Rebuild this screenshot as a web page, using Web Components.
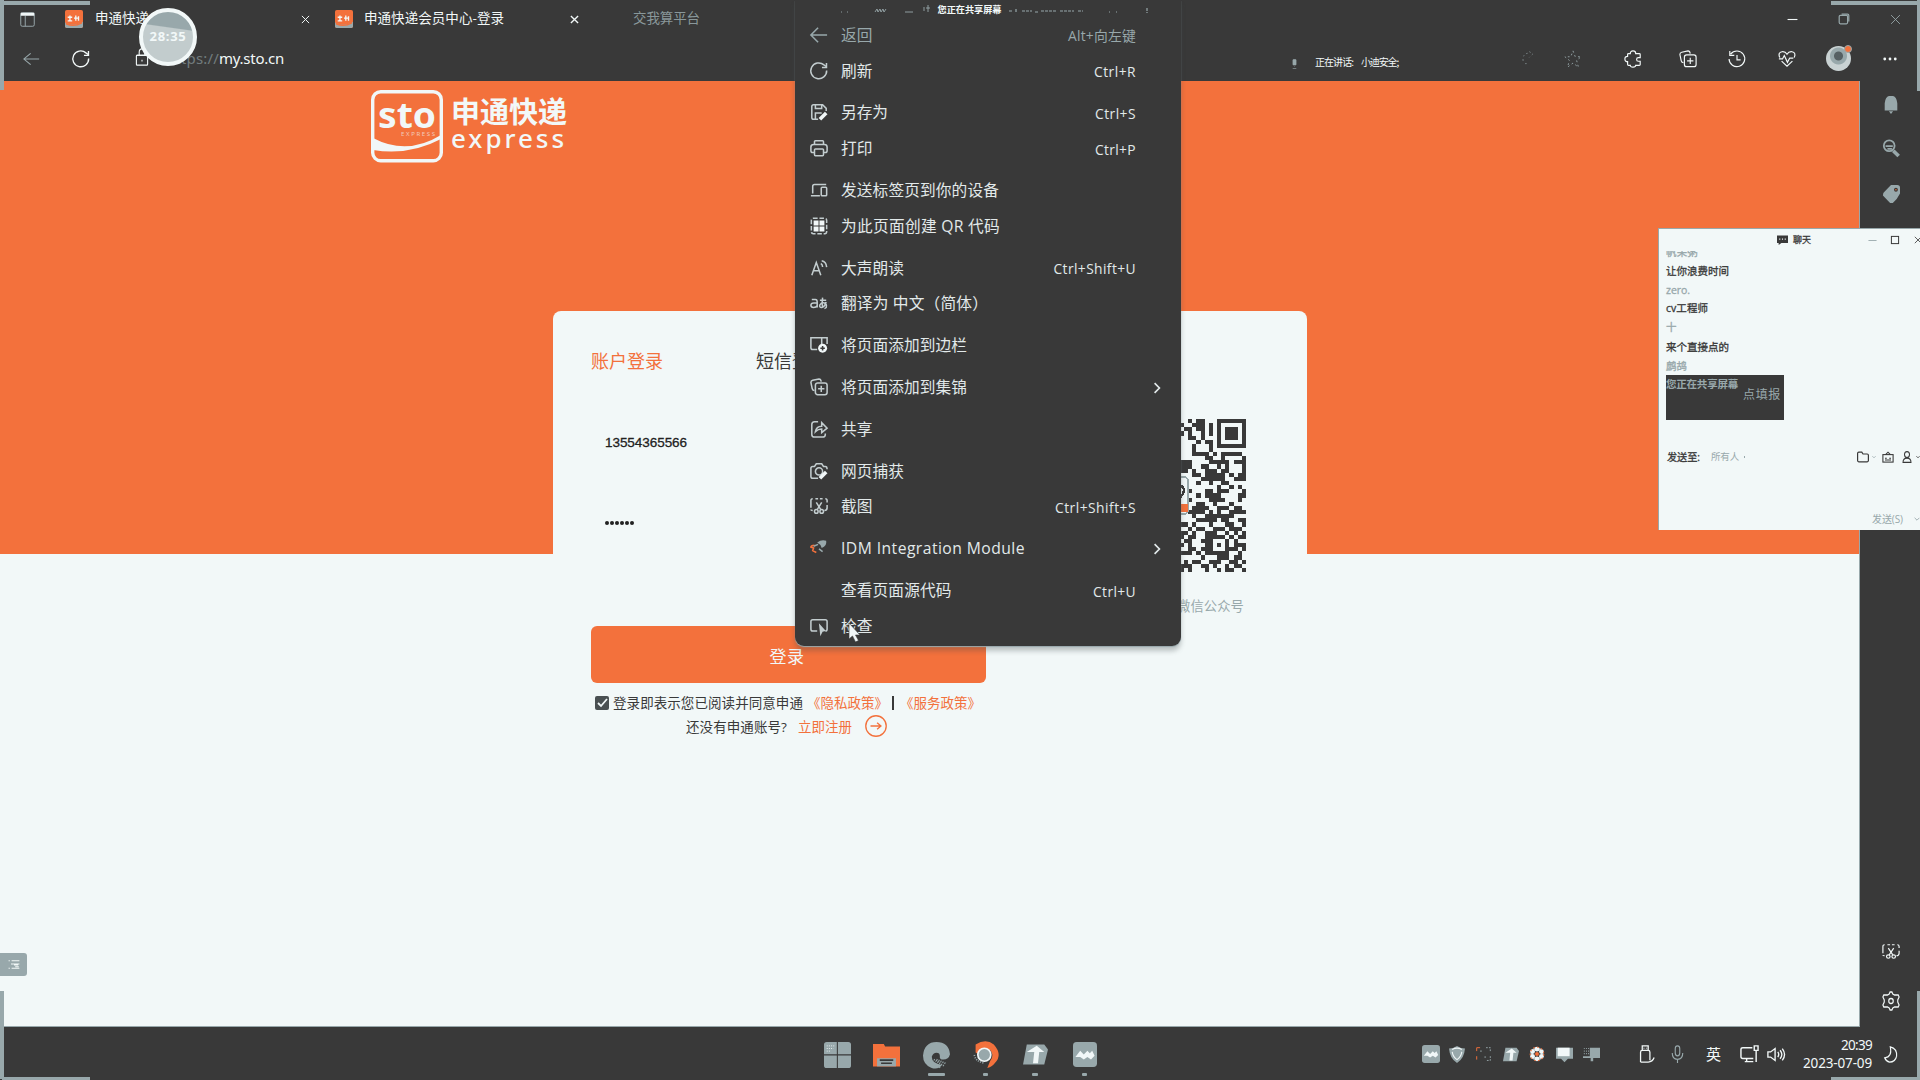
<!DOCTYPE html>
<html lang="zh-CN">
<head>
<meta charset="utf-8">
<title>申通快递会员中心-登录</title>
<style>
:root{--dark:#393939;--orange:#f3713c;--light:#f2f8f8;--gray:#98a8ab}
html,body{margin:0;width:1920px;height:1080px;overflow:hidden;background:var(--dark)}
body{font-family:"Open Sans","Noto Sans CJK SC",sans-serif;color:var(--light)}
</style>
</head>
<body>
<desktop-screen></desktop-screen>
<script>
const define=(name,html,init)=>customElements.define(name,class extends HTMLElement{
  constructor(){super();const t=document.createElement('template');t.innerHTML=html;
    this.attachShadow({mode:'open'}).append(t.content.cloneNode(true));}
  connectedCallback(){if(init)init.call(this,this.shadowRoot);}
});

/* Glyphs are drawn on a 20x20 grid; c = currentColor stroke */
const snip='<path d="M1 12V4q0-2 2-2M6 2h3M11 2h3M17 2q2 0 2 2v2M19 9v3q0 3-3 3M1 14q0 1 2 1"/><path d="M7 6l5 8M13 6l-5 8"/><circle cx="7" cy="16" r="2"/><circle cx="13" cy="16" r="2"/>';
const coll='<path d="M5 14Q3 14 2.500 12L1 5Q1 3 3 2.500L10 1Q12 1 12.500 4"/><rect x="6" y="5.500" width="13" height="13" rx="2.500"/><path d="M12.500 8.500v7M9 12h7"/>';
const reload='<path d="M18.500 9.500A8.800 8.800 0 1 1 15.500 3.200L18 5"/><path d="M18.300 1v5h-5"/>';
const sto='<rect width="20" height="20" rx="2" fill="var(--orange)" stroke="none"/><path d="M3 8h5M5.500 6v6M3 12h5M12 6v6M10 9h5M15 7v5" stroke="#f1f7f8" stroke-width="1.500"/><path d="M0 14q10 5 20-1v5q0 2-2 2H2q-2 0-2-2z" fill="#98a8ab" stroke="none"/><path d="M1 14q9 5 18-1v2q-9 5-18 1z" fill="var(--orange)" stroke="none"/>';
const G={
 tabs:'<rect x="1" y="1" width="18" height="18" rx="2"/><path d="M7 5v14"/><path d="M1 3h18" stroke-width="4" stroke="#f1f7f8"/>',
 sto, x:'<path d="M2 2l16 16M18 2L2 18"/>',
 back:'<path d="M19 10H1M9 2L1 10l8 8"/>', reload,
 lock:'<rect x="2" y="8" width="16" height="11" rx="1"/><path d="M6 8V5q0-4 4-4t4 4v3M10 13v2" />',
 min:'<path d="M1 10h18"/>',
 max:'<rect x="2" y="4" width="14" height="14" rx="2"/><path d="M6 2h10q2 0 2 2v10"/>',
 sq:'<rect x="1" y="1" width="18" height="18"/>',
 puzzle:'<path d="M7 4q0-3 3-3t3 3h4q1 0 1 1v3.500h-2q-2 0-2 2t2 2h2V16q0 1-1 1h-4q0 2-3 2t-3-2H5q-1 0-1-1v-3q-3 0-3-3t3-3V5q0-1 1-1z"/>',
 coll, history:'<path d="M3 4.500A8.700 8.700 0 1 1 1.200 10M2 1v5h5M10 5.500V11h4"/>',
 heart:'<path d="M2 9Q-.500 3 4.500 2 8 1.500 10 5 12 1.500 15.500 2 20.500 3 18 9M1 10.500h4l2-4 3.500 8 2.500-5h4M4 13l6 6 6-6"/>',
 dots:'<g fill="currentColor" stroke="none"><circle cx="2.500" cy="10" r="2"/><circle cx="10" cy="10" r="2"/><circle cx="17.500" cy="10" r="2"/></g>',
 star:'<path stroke-dasharray="2 3" d="M10 1l2.500 6.500H19l-5 4 2 7.500-6-4.500L4 19l2-7.500-5-4h6.500z"/>',
 faint:'<path stroke-dasharray="2 4" d="M3 14Q2 3 12 3M12 1l5 3-5 5M6 18h3"/>',
 mic1:'<rect x="6.500" y="1" width="7" height="11" rx="1" fill="currentColor"/><path d="M10 15v1M6 19h8"/>',
 bell:'<path fill="currentColor" stroke="none" d="M1 16V8q1-7 6-8h6q5 1 6 8v8zM7 17h6l-3 3z"/>',
 search:'<circle cx="8" cy="7.500" r="6"/><path d="M4 8h8M6 11h5"/><path d="M12.500 13l6 6" stroke-width="4"/>',
 tag:'<path fill="currentColor" stroke="none" d="M10 1h7q3 0 3 3v6q-3 6-8 10h-3l-8-8q0-3 2-4z"/><circle cx="15.500" cy="6" r="1.500" fill="var(--orange)" stroke="#393939"/>',
 snip, gear:'<path d="M8 3l1-2h2l1 2 2 1h4l1 2-1.500 3v2l1.500 3-1 2h-4l-2 1-1 2H9l-1-2-2-1H2l-1-2 1.500-3V9L1 6l1-2h4z"/><circle cx="10" cy="10" r="2.500"/>',
 save:'<path d="M9 18H4q-2 0-2-2V4q0-2 2-2h10l4 4v3M6 2v4h7V2M6 18v-7h7"/><path d="M11 18l7-7" stroke-width="4" stroke="#f1f7f8"/>',
 print:'<path d="M5 6V3q0-1 1-1h8q1 0 1 1v3M5 15H3q-2 0-2-2V9q0-3 3-3h12q3 0 3 3v4q0 2-2 2h-2"/><rect x="5" y="11" width="10" height="7.500" rx="1"/>',
 send:'<path d="M3 14V6q0-2 2-2h13M1 16.500h10"/><rect x="12.500" y="7" width="6" height="9.500" rx="1"/>',
 qr:'<rect x="1.500" y="1.500" width="17" height="17" rx="2" stroke-dasharray="5 2"/><path fill="#f1f7f8" stroke="none" d="M4 4h5.500v5.500H4zM10.500 4H16v5.500h-5.500zM4 10.500h5.500V16H4zM10.500 10.500H16V16h-5.500z"/>',
 aloud:'<path d="M2 18L7 4l5 14M4 13h6M12 5q2 1 2 4M13 2q5 1 5.500 7"/>',
 trans:'<path d="M2 6h4q2 0 2 3v6M8 10H4q-3 0-3 2.500T4 15q3 0 4-2M11 7h7M14 4q-1 7 0 11M18 9q-2 6-5 6t-2-3q2-3 5-2t2 5q-1 1-2 1"/>',
 side:'<path d="M8 15H3q-2 0-2-2V2h18v7M13 2v7"/><circle cx="14" cy="13.500" r="5" fill="#f1f7f8" stroke="none"/><path d="M14 11v5M11.500 13.500h5" stroke="#393939"/>',
 share:'<path d="M9 2H5Q2 2 2 5v11q0 3 3 3h9q3 0 3-3v-1M6 13q1-6 7-6V3l6 6-6 5v-4q-4 0-7 3z"/>',
 cam:'<path d="M9 18H3q-2 0-2-2V7q0-2 2-2h2l2-3h6l2 3h2q2 0 2 3"/><circle cx="10" cy="10.500" r="4"/><path d="M11 18l7-7" stroke-width="4" stroke="#f1f7f8"/>',
 idm:'<path fill="#98a8ab" stroke="none" d="M8 4q5-4 10-2 1 6-5 8-1-4-5-6z"/><path stroke="var(--orange)" d="M5 7q-4 0-4 2l3 1-1 3 4 2"/><path stroke="#98a8ab" d="M9 6L4 8M10 11l4 3"/>',
 inspect:'<path d="M8 15.500H3q-2 0-2-2V5q0-2 2-2h14q2 0 2 2v8.500q0 2-2 2"/><path fill="currentColor" d="M11 9.500l5 5.500-2.500.500-1.500 3z"/>',
 chev:'<path d="M6 2l8 8-8 8"/>', down:'<path d="M2 6l8 8 8-8"/>',
 chat:'<path fill="currentColor" stroke="none" d="M0 1h20v15H8l-5 4v-4H0z"/><path d="M4 8h2M9 8h2M14 8h2" stroke="#f1f7f8" stroke-width="2.500"/>',
 folder2:'<path d="M1 4q0-2 2-2h5l2 3h7q2 0 2 2v9q0 2-2 2H3q-2 0-2-2z"/>',
 bot:'<rect x="1.500" y="6" width="17" height="12.500"/><path d="M6 6l4-4 4 4M5 12h3M12 12h3M5 15h10"/>',
 person:'<circle cx="10" cy="6" r="5"/><path d="M2 19q0-7 8-7t8 7z"/>',
 win:'<path fill="currentColor" stroke="none" d="M2 0h7.500v9.500H0V2q0-2 2-2zM10.300 0H18q2 0 2 2v7.500h-9.700zM0 10.300h9.500V20H2q-2 0-2-2zM10.300 10.300H20V18q0 2-2 2h-7.700z"/><path d="M2 3h6M2 5h5M2 7h3" stroke="#f1f7f8" stroke-width=".6" stroke-dasharray=".8 .8"/>',
 fold:'<path fill="var(--orange)" stroke="none" d="M0 1.500h8l1 2h11V19.500H0z"/><path fill="#98a8ab" stroke="none" d="M3 13h14v6.500H3z"/><path d="M5 14.500h10M6 17h8" stroke="#393939"/>',
 edge:'<path fill="currentColor" stroke="none" d="M0 10Q1 0 10 0t10 9q-1 4-5 4-3 0-2.500-2.500Q12.500 8 10 8t-3.500 3q0 5 7.500 6-3 4-8 2-6-2.500-6-9z"/><path stroke-dasharray=".8 .8" d="M8 13l8 5M8 16l5 3M10 13l7 3"/>',
 chrome:'<path fill="var(--orange)" stroke="none" d="M2 2q8-5 14 0 7 8 1 14-2 3-6 4l2-5q4-5 0-9L5 10 2 8z"/><circle cx="8.700" cy="9.800" r="5" fill="#98a8ab" stroke="#f1f7f8"/><path stroke-dasharray=".8 1" d="M1 10q1 5 7 6"/>',
 up:'<path fill="currentColor" stroke="none" d="M3 2h14l3 4-3 12H0z"/><path fill="#f1f7f8" stroke="none" d="M11 3l6 5h-4l-1 9H8l1-9H3z"/>',
 mt:'<rect width="20" height="20" rx="3" fill="currentColor" stroke="none"/><path fill="#f1f7f8" stroke="none" d="M2 12l4-5 3 3 3-3 2 2 2-2 2 4-3 3-3-2-3 2-3-2z"/>',
 shield:'<path fill="currentColor" stroke="none" d="M10 0q5 3 10 3-1 12-10 17Q1 15 0 3q5 0 10-3z"/><path stroke="#f1f7f8" d="M4 4q6-3 12 0M4 7q1 6 6 9 5-3 6-9"/>',
 frame:'<path d="M13 2h5v4M18 12v5h-5M6 6h2M11 13h3" stroke-dasharray="2 1.500"/><path stroke="var(--orange)" d="M6 2H2v4M2 12v4"/>',
 flower:'<circle cx="10" cy="10" r="7" stroke="#98a8ab" stroke-width="3"/><g fill="#f1f7f8" stroke="none"><circle cx="10" cy="4" r="3"/><circle cx="10" cy="16" r="3"/><circle cx="4.500" cy="7" r="3"/><circle cx="15.500" cy="7" r="3"/><circle cx="4.500" cy="13" r="3"/><circle cx="15.500" cy="13" r="3"/></g><circle cx="10" cy="10" r="8.500" stroke="var(--orange)" stroke-dasharray="2 3"/><circle cx="10" cy="10" r="2.500" fill="var(--orange)" stroke="none"/>',
 pc:'<path fill="currentColor" stroke="none" d="M0 2h20v13h-6l-4 4-4-4H0z"/><path fill="#f1f7f8" stroke="none" d="M2 2h14v10H2z"/>',
 pc2:'<path fill="currentColor" stroke="none" d="M8 2h12v12h-8v4H9v-4H0v-2h8z"/><path stroke-dasharray="1 1.500" d="M1 3h6M1 6h6M1 9h6"/>',
 usb:'<path d="M5 6V1h7v5M3 19V8q0-2 2-2h7q2 0 2 2v9M3 19h9q5 0 7-5M7 3v1M10 3v1"/>',
 mic:'<rect x="7" y="1" width="6" height="11" rx="3"/><path d="M3 9q0 7 7 7t7-7M10 16v4"/>',
 net:'<path d="M13 3H3Q1 3 1 5v8q0 2 2 2h11M7 15v3M5 18.500h9"/><path d="M15 1h4v5h-4zM17 6v13"/>',
 vol:'<path d="M1 7h3l5-4v14l-5-4H1zM12 7q2 3 0 6M14.500 5q4 5 0 10M17 3q5 7 0 14"/>',
 moon:'<path d="M9 1q10 2 9 11-2 7-10 7-5-1-7-5 11-1 8-13z"/>',
 list:'<path d="M1 3h2M6 3h13M1 17h2M6 17h13M5 9h14M10 11h7M12 14h6"/>',
 arrow:'<circle cx="10" cy="10" r="9.300"/><path d="M5 10h9M11 7l3.500 3-3.500 3"/>'
};
define('ui-icon','<style>:host{display:block;flex:none}svg{display:block;width:100%;height:100%;overflow:visible}</style><svg viewBox="0 0 20 20" preserveAspectRatio="none" fill="none" stroke="currentColor" stroke-width="1.3"></svg>',
function(r){
  const s=(this.getAttribute('s')||'18').split(',');
  this.style.width=s[0]+'px';this.style.height=(s[1]||s[0])+'px';
  const svg=r.querySelector('svg');svg.innerHTML=G[this.getAttribute('n')];
  if(this.hasAttribute('t'))svg.setAttribute('stroke-width',this.getAttribute('t'));
});

define('site-logo',`<style>
:host{display:flex;gap:8px;height:72px;color:var(--light)}
.words{display:flex;flex-direction:column}
.cn{font:bold 29px/28px "Noto Sans CJK SC",sans-serif;margin-top:6px}
.en{font:500 26px/28px "Noto Sans",sans-serif;margin-top:0}
svg{flex:none}
</style>
<svg width="72" height="73" viewBox="0 0 72 73"><rect x="1.700" y="1.700" width="68.600" height="69" rx="8" fill="none" stroke="#f1f7f8" stroke-width="3.400"/>
<text x="7" y="38" font-family="Noto Sans" font-weight="700" font-size="36" textLength="58" lengthAdjust="spacingAndGlyphs" fill="#f1f7f8">sto</text>
<text x="30" y="46" font-family="Noto Sans" font-size="6" textLength="34" fill="#f1f7f8" opacity=".65">EXPRESS</text>
<path d="M2 48Q36 66 70 45v4Q38 66 2 60z" fill="#f1f7f8"/></svg>
<div class="words"><fit-text class="cn" w="116">申通快递</fit-text><fit-text class="en" w="116">express</fit-text></div>`);

define('qr-code','<style>:host{display:block;width:153px;height:153px}svg{display:block}</style><svg width="153" height="153" viewBox="0 0 37 37" shape-rendering="crispEdges"></svg>',function(r){
  const rows=['0010110001111111','1001110101000001','0110110101011101','1010010101011101','0011010001011101','0000101101000001','0001000101111111','0001000100000000','0001111010111110','0000001100100001','1110000111110111','1110011001010001','1101001110110001','0001101111101011','0000011111100111','0000100100110000','0000000001001010','0010001101110001','0000101111000011','0010000111100010','0000110010001000','0001111001110110','0011110101001111','0001001111111000','0000111110110011','1101000100011001','0010110011101110','1101001110010101','1011001111101011','0110011100010100','1010001101010111','0011011100011101','1110101111110010','0000010001110110','0101100111001101','1110011010010110','1010001001011001'];
  let d='';rows.forEach((row,y)=>[...row].forEach((c,x)=>{if(c==='1')d+=`M${x+21} ${y}h1v1h-1z`}));
  r.querySelector('svg').innerHTML=`<path d="${d}" fill="#393939"/><rect x="15" y="14" width="8" height="9" rx="1" fill="#f1f7f8" stroke="#98a8ab" stroke-width=".4"/><rect x="15" y="20.500" width="8" height="2" fill="#f3713c"/><path d="M21 16q2 1 0 3" stroke="#393939" stroke-width=".6" fill="none"/>`;
});

define('browser-bar',`<style>
:host{display:flex;flex-direction:column;height:81px;background:var(--dark);font-size:13.5px}
.row{display:flex;align-items:center}
.tabs{height:38px;line-height:20px}.addr{height:41px}
.tabs fit-text{padding-bottom:2px}
.gray{color:var(--gray)}
.addr fit-text{font:15px/20px "Noto Sans",sans-serif;padding-bottom:1px}
.addr .who{font:10px/14px "Noto Sans CJK SC",sans-serif}
.av{width:25px;height:25px;border-radius:50%;background:radial-gradient(circle at 50% 40%,#566063 0 4px,#98a8ab 5px 8px,#c9d2d3 9px);display:flex;justify-content:flex-end;flex:none}
.av i{width:6px;height:6px;border-radius:50%;background:var(--orange);border:1px solid var(--gray);margin:-1px -1px 0 0}
</style>
<div class="row tabs">
<ui-icon n="tabs" s="15,15" class="gray" style="margin-left:20px"></ui-icon>
<ui-icon n="sto" s="18" style="margin-left:30px"></ui-icon>
<fit-text w="54" style="margin-left:12px">申通快递</fit-text>
<ui-icon n="x" s="9" t="2.200" style="margin-left:152px"></ui-icon>
<ui-icon n="sto" s="18" style="margin-left:25px"></ui-icon>
<fit-text w="140" style="margin-left:11px">申通快递会员中心-登录</fit-text>
<ui-icon n="x" s="9" t="3" style="margin-left:66px"></ui-icon>
<fit-text w="67" class="gray" style="margin-left:54px;opacity:.85">交我算平台</fit-text>
<ui-icon n="min" s="11" t="2" style="margin-left:1087px"></ui-icon>
<ui-icon n="max" s="12" t="2" class="gray" style="margin-left:40px"></ui-icon>
<ui-icon n="x" s="11" t="1.600" class="gray" style="margin-left:40px"></ui-icon>
</div>
<div class="row addr">
<ui-icon n="back" s="17,14" class="gray" style="margin-left:23px"></ui-icon>
<ui-icon n="reload" s="18" t="1.500" style="margin-left:32px"></ui-icon>
<ui-icon n="lock" s="14,18" t="1.600" style="margin-left:45px;margin-top:-4px"></ui-icon>
<fit-text w="53" class="gray" style="margin-left:17px;opacity:.6">https://</fit-text>
<fit-text w="65" style="margin-left:0">my.sto.cn</fit-text>
<ui-icon n="mic1" s="9,10" class="gray" style="margin:10px 0 0 1006px"></ui-icon>
<fit-text w="38" class="who" style="margin:8px 0 0 16px">正在讲话:</fit-text>
<fit-text w="37" class="who" style="margin:8px 0 0 8px">小迪安全;</fit-text>
<ui-icon n="faint" s="14" t="1" class="gray" style="margin-left:123px;margin-top:-2px"></ui-icon>
<ui-icon n="star" s="18" t="1" class="gray" style="margin-left:29px"></ui-icon>
<ui-icon n="puzzle" s="18" style="margin-left:42px"></ui-icon>
<ui-icon n="coll" s="18" style="margin-left:37px"></ui-icon>
<ui-icon n="history" s="18" style="margin-left:31px"></ui-icon>
<ui-icon n="heart" s="18,17" style="margin-left:32px"></ui-icon>
<div class="av" style="margin-left:30px"><i></i></div>
<ui-icon n="dots" s="14" style="margin-left:32px"></ui-icon>
</div>`);

define('login-page',`<style>
:host{display:flex;flex-direction:column;width:1859px;height:945px;border-right:1px solid var(--gray);border-bottom:1px solid var(--gray);background:linear-gradient(var(--orange) 0 473px,var(--light) 473px);overflow:hidden}
site-logo{margin:9px 0 0 371px}
.card{margin:149px 0 0 553px;width:754px;height:500px;border-radius:8px;background:var(--light);display:flex;justify-content:space-between;color:var(--dark);box-sizing:border-box}
.form{width:395px;margin-left:38px;display:flex;flex-direction:column}
.tabs{display:flex;gap:93px;margin-top:37px;font-size:18px;line-height:26px}
.or{color:var(--orange)}
.num{font:13.5px/20px "Liberation Sans",sans-serif;margin:59px 0 0 14px;color:#222;-webkit-text-stroke:.3px}
.pw{display:flex;gap:1px;margin:68px 0 0 14px;height:3.500px}.pw i{width:4px;height:4px;border-radius:50%;background:#222}
.btn{margin-top:101.500px;height:57px;border-radius:6px;background:var(--orange);color:var(--light);display:flex;align-items:center;justify-content:center;font-size:17px}
.btn fit-text{margin-right:3px;margin-top:1px}
.line{display:flex;align-items:center;font-size:13.5px;line-height:20px;height:20px}
.cb{width:14px;height:14px;border-radius:2px;background:#4a5052;box-sizing:border-box}
.qr{margin:108px 61px 0 0;width:154px;display:flex;flex-direction:column;align-items:flex-end;color:var(--gray);font-size:13.3px;line-height:20px}
</style>
<site-logo></site-logo>
<section class="card"><div class="form">
<div class="tabs"><fit-text w="72" class="or">账户登录</fit-text><fit-text w="72">短信登录</fit-text></div>
<fit-text w="82" class="num">13554365566</fit-text>
<div class="pw"><i></i><i></i><i></i><i></i><i></i><i></i></div>
<div class="btn"><fit-text w="35">登录</fit-text></div>
<div class="line" style="margin-top:10px"><span class="cb" style="margin-left:4px"><svg width="14" height="14" style="display:block"><path d="M3 7l3 3 6-7" fill="none" stroke="#f1f7f8" stroke-width="1.800"/></svg></span>
<fit-text w="190" style="margin-left:4px">登录即表示您已阅读并同意申通</fit-text><fit-text w="81" class="or" style="margin-left:4px">《隐私政策》</fit-text><span style="margin:0 0 0 4px;width:2px;height:14px;background:#393939"></span><fit-text w="81" class="or" style="margin-left:6px">《服务政策》</fit-text></div>
<div class="line" style="margin:4px 0 0 95px"><fit-text w="101">还没有申通账号?</fit-text><fit-text w="54" class="or" style="margin-left:11px">立即注册</fit-text><ui-icon n="arrow" s="22" class="or" t="1.200" style="margin:-3px 0 0 13px"></ui-icon></div>
</div>
<div class="qr"><qr-code></qr-code><fit-text w="67" style="margin:24px 2px 0 0">微信公众号</fit-text></div>
</section>`);

define('side-bar',`<style>:host{display:flex;flex-direction:column;width:60px;align-items:center;background:var(--dark);color:var(--gray)}ui-icon{margin-left:2px}.l{color:var(--light)}</style>
<ui-icon n="bell" s="14,18" style="margin-top:15px"></ui-icon>
<ui-icon n="search" s="18" t="2" style="margin-top:25px"></ui-icon>
<ui-icon n="tag" s="18,19" style="margin-top:27px"></ui-icon>
<ui-icon n="snip" s="18,17" style="margin-top:740px" class="l"></ui-icon>
<ui-icon n="gear" s="18,20" style="margin-top:31px" class="l"></ui-icon>`);

define('task-bar',`<style>
:host{display:flex;height:53px;background:var(--dark);color:var(--gray);font:13.5px/18px "Noto Sans","Noto Sans CJK SC",sans-serif}
.apps{display:flex;gap:21.6px;margin-left:823px;width:275px;flex:none}
.a{width:28px;height:49px;padding-top:15px;box-sizing:border-box;display:flex;flex-direction:column;align-items:center;justify-content:space-between;flex:none}
.a i{height:3px;border-radius:1px;background:var(--gray)}
.tray{display:flex;align-items:center;margin-left:324px;height:54px}
.l{color:var(--light)}.clock{display:flex;flex-direction:column;align-items:flex-end;margin-left:18px;color:var(--light)}
</style>
<div class="apps"><div class="a"><ui-icon n="win" s="27,26"></ui-icon></div><div class="a"><ui-icon n="fold" s="27,25"></ui-icon></div><div class="a"><ui-icon n="edge" s="27"></ui-icon><i style="width:17px"></i></div><div class="a"><ui-icon n="chrome" s="26"></ui-icon><i style="width:5px"></i></div><div class="a"><ui-icon n="up" s="25"></ui-icon><i style="width:6px"></i></div><div class="a"><ui-icon n="mt" s="24,25"></ui-icon><i style="width:5px"></i></div></div>
<div class="tray">
<ui-icon n="mt" s="18"></ui-icon><ui-icon n="shield" s="16,17" style="margin-left:9px"></ui-icon><ui-icon n="frame" s="17" t="1.100" style="margin-left:10px"></ui-icon><ui-icon n="up" s="16,17" style="margin-left:11px"></ui-icon><ui-icon n="flower" s="16" style="margin-left:10px"></ui-icon><ui-icon n="pc" s="17" style="margin-left:11px"></ui-icon><ui-icon n="pc2" s="17" style="margin-left:10px"></ui-icon>
<ui-icon n="usb" s="17,18" t="1.500" class="l" style="margin-left:38px"></ui-icon><ui-icon n="mic" s="15,18" t="1.500" style="margin-left:15px"></ui-icon>
<fit-text w="15" class="l" style="margin-left:21px;font-size:15px">英</fit-text>
<ui-icon n="net" s="19,18" t="1.500" class="l" style="margin-left:19px"></ui-icon><ui-icon n="vol" s="18,17" t="1.500" class="l" style="margin-left:8px"></ui-icon>
<div class="clock"><fit-text w="31">20:39</fit-text><fit-text w="69">2023-07-09</fit-text></div>
<ui-icon n="moon" s="14,17" t="1.600" class="l" style="margin-left:12px"></ui-icon></div>`);

define('menu-item',`<style>
:host{display:flex;align-items:center;height:35.8px;flex:none;padding-left:15px;color:#e2e9ea}
:host([sep]){margin-bottom:6px}:host([off]){color:var(--gray)}
.ic{width:18px;height:18px;flex:none;color:#c3cdcf}
:host([off]) .ic{color:var(--gray)}
fit-text{line-height:22px}.label{font-size:15.7px;margin-left:13px}
.key{font-size:13.8px;margin:3px 45px 0 auto}
.go{margin:2px 18px 0 auto}
</style><div class="ic"></div>`,function(r){
  const g=n=>this.getAttribute(n);
  if(g('i')&&G[g('i')])r.querySelector('.ic').innerHTML=`<ui-icon n="${g('i')}" t="1.700"></ui-icon>`;
  const add=(cls,t,w)=>{const e=document.createElement('fit-text');e.className=cls;e.textContent=t;e.setAttribute('w',w);r.append(e)};
  add('label',g('label'),g('w'));
  if(g('key'))add('key',g('key'),g('kw'));
  if(this.hasAttribute('sub'))r.append(Object.assign(document.createElement('div'),{className:'go',innerHTML:'<ui-icon n="chev" s="12" t="2.800"></ui-icon>'}));
});

define('context-menu',`<style>
:host{display:flex;flex-direction:column;width:386px;height:646px;box-sizing:border-box;background:var(--dark);border-radius:0 0 9px 9px;box-shadow:0 1px 1px var(--gray),0 5px 5px rgba(60,70,72,.3)}
.top{display:flex;justify-content:center;height:17px;align-items:center;font:bold 9.200px/14px "Noto Sans CJK SC",sans-serif;gap:6px;padding-left:12px;flex:none}
</style>
<div class="top"><svg width="93" height="12"><path d="M2 9h1M8 9h1M36 9l2-3 1 3 2-3 1 3 2-3 1 3 2-3M66 9h8M85 8V4M89 9V2M87 5h4" stroke="#98a8ab" fill="none" stroke-width=".9"/></svg><fit-text w="64">您正在共享屏幕</fit-text><svg width="142" height="12"><path d="M1 8h3M8 9V6M14 8h10M27 9h3M33 8h16M52 8h14M70 8h5M101 9h1M108 9h1M139 5v5" stroke="#98a8ab" stroke-width="1.200" stroke-dasharray="3 1"/></svg></div>
<menu-item off i="back" label="返回" w="31.500" key="Alt+向左键" kw="68"></menu-item>
<menu-item sep i="reload" label="刷新" w="31.500" key="Ctrl+R" kw="42"></menu-item>
<menu-item i="save" label="另存为" w="47" key="Ctrl+S" kw="41"></menu-item>
<menu-item sep i="print" label="打印" w="31.500" key="Ctrl+P" kw="41"></menu-item>
<menu-item i="send" label="发送标签页到你的设备" w="158"></menu-item>
<menu-item sep i="qr" label="为此页面创建 QR 代码" w="159"></menu-item>
<menu-item i="aloud" label="大声朗读" w="63" key="Ctrl+Shift+U" kw="82.500"></menu-item>
<menu-item sep i="trans" label="翻译为 中文（简体）" w="147"></menu-item>
<menu-item sep i="side" label="将页面添加到边栏" w="126"></menu-item>
<menu-item sep i="coll" label="将页面添加到集锦" w="126" sub></menu-item>
<menu-item sep i="share" label="共享" w="31.500"></menu-item>
<menu-item i="cam" label="网页捕获" w="63"></menu-item>
<menu-item sep i="snip" label="截图" w="31.500" key="Ctrl+Shift+S" kw="81"></menu-item>
<menu-item sep i="idm" label="IDM Integration Module" w="184" sub></menu-item>
<menu-item label="查看页面源代码" w="110.500" key="Ctrl+U" kw="43"></menu-item>
<menu-item i="inspect" label="检查" w="31.500"></menu-item>`);

define('chat-window',`<style>
:host{display:flex;flex-direction:column;width:262px;height:302px;box-sizing:border-box;overflow:hidden;background:var(--light);border-left:1px solid var(--gray);border-top:1px solid var(--gray);color:var(--dark);font:10.500px/16px "Open Sans","Noto Sans CJK SC",sans-serif}
.bar{display:flex;align-items:center;height:22px;flex:none;font-size:9px;-webkit-text-stroke:.3px}
.msgs{display:flex;flex-direction:column;padding-left:7px;height:124px;flex:none;overflow:hidden;-webkit-text-stroke:.3px}
.msgs fit-text{flex:none;line-height:18px;height:19px}
.g{color:var(--gray)}
.shot{width:118px;height:45px;background:var(--dark);margin-left:7px;display:flex;flex-direction:column;color:var(--gray);flex:none}
.to{display:flex;align-items:center;height:20px;margin-top:27px;flex:none}
.foot{display:flex;align-items:center;height:16px;margin-top:44px;padding-left:213px;flex:none}
</style>
<div class="bar"><ui-icon n="chat" s="11,10" style="margin-left:118px"></ui-icon><fit-text w="18" style="margin-left:5px">聊天</fit-text><ui-icon n="min" s="9" t="2" class="g" style="margin-left:57px"></ui-icon><ui-icon n="sq" s="8" t="2.500" style="margin-left:14px"></ui-icon><ui-icon n="x" s="8" t="2" style="margin-left:15px"></ui-icon></div>
<div class="msgs"><fit-text w="32" class="g" style="margin-top:-8px">帆呆粥</fit-text><fit-text w="63">让你浪费时间</fit-text><fit-text w="24" class="g" style="height:18px">zero.</fit-text><fit-text w="42" style="height:19px">cv工程师</fit-text><fit-text w="10" class="g" style="height:20px">十</fit-text><fit-text w="63" style="height:19px">来个直接点的</fit-text><fit-text w="21" class="g">鹧鸪</fit-text></div>
<div class="shot"><fit-text w="72" style="margin-top:3px;line-height:13px;font-weight:bold">您正在共享屏幕</fit-text><fit-text w="38" style="margin:-3px 0 0 77px;font-size:12px;line-height:14px">点填报</fit-text></div>
<div class="to"><fit-text w="33" style="margin-left:8px;font-size:10.200px;-webkit-text-stroke:.3px">发送至:</fit-text><fit-text w="28" class="g" style="margin-left:11px;font-size:9.500px">所有人</fit-text><span style="margin-left:5px;width:3px;height:2px;background:var(--gray)"></span>
<ui-icon n="folder2" s="12" t="2" style="margin-left:112px"></ui-icon><ui-icon n="down" s="4" t="4" class="g" style="margin-left:3px"></ui-icon><ui-icon n="bot" s="12" t="1.800" style="margin-left:6px"></ui-icon><ui-icon n="person" s="10,12" t="2" style="margin-left:8px"></ui-icon><ui-icon n="down" s="4" t="4" style="margin-left:4px"></ui-icon></div>
<div class="foot g"><fit-text w="31" style="font-size:10px">发送(S)</fit-text><ui-icon n="down" s="6" t="3" style="margin-left:11px"></ui-icon></div>`);

define('desktop-screen',`<style>
:host{display:flex;flex-direction:column;width:1920px;height:1080px;position:relative;overflow:hidden;background:var(--dark)}
.mid{display:flex;height:946px}
.over{position:absolute}
.c{background:var(--gray)}
.timer{left:139px;top:8px;width:58px;height:58px;box-sizing:border-box;border:4px solid var(--light);border-radius:50%;background:linear-gradient(188deg,var(--gray) 0 32%,#c2cccd 34%);display:flex;align-items:center;justify-content:center}
.timer fit-text{font:bold 13px/16px "Noto Sans",sans-serif;margin-top:-2px}
.widget{left:0;top:953px;width:27px;height:23px;border-radius:0 3px 3px 0;display:flex;align-items:center;justify-content:center}
</style>
<browser-bar></browser-bar>
<div class="mid"><login-page></login-page><side-bar></side-bar></div>
<task-bar></task-bar>
<context-menu class="over" style="left:795px;top:0"></context-menu>
<chat-window class="over" style="left:1658px;top:228px"></chat-window>
<div class="over timer"><fit-text w="37">28:35</fit-text></div>
<div class="over widget c"><ui-icon n="list" s="12,11" t="1.800"></ui-icon></div>
<div class="over c" style="left:2px;top:1px;width:88px;height:4px"></div><div class="over c" style="left:0;top:0;width:4px;height:90px"></div>
<div class="over c" style="right:0;top:1px;width:89px;height:4px"></div><div class="over c" style="right:0;top:0;width:3px;height:91px"></div>
<div class="over c" style="left:0;top:991px;height:88px;width:4px"></div><div class="over c" style="left:2px;bottom:0;width:88px;height:3px"></div>
<div class="over c" style="right:0;top:991px;width:3px;height:89px"></div><div class="over c" style="right:0;bottom:0;width:89px;height:3px"></div>
<svg class="over" style="left:848px;top:623px" width="13" height="20"><path d="M1 0v16l3.500-3 3 6 3-1.500-3-5.500H12z" fill="#f1f7f8" stroke="#393939" stroke-width=".6"/></svg>`);

/* Single-line text set to a given width by tracking. */
define('fit-text','<style>:host{display:block;flex:none;white-space:nowrap}span{display:inline-block}</style><span><slot></slot></span>',function(r){
  const w=parseFloat(this.getAttribute('w')),n=[...this.textContent.trim()].length,s=r.querySelector('span');
  this.style.width=w+'px';
  const d=w-s.getBoundingClientRect().width;
  if(n>1)s.style.letterSpacing=(d/n).toFixed(3)+'px';
});
</script>
</body>
</html>
